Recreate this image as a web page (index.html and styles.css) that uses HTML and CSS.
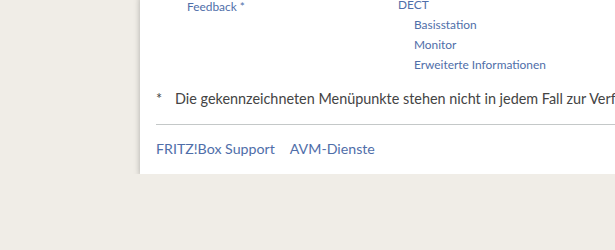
FILE: index.html
```html
<!DOCTYPE html>
<html lang="de">
<head>
    <meta charset="UTF-8">
    <title>FRITZ!Box Inhalt</title>
    <link rel="stylesheet" href="styles.css">
</head>
<body>
    <div class="page">
        <div class="sitemap">
            <ul class="col col-left">
                <li><a href="#">Feedback *</a></li>
            </ul>
            <ul class="col col-right">
                <li><a href="#">DECT</a>
                    <ul class="sub">
                        <li><a href="#">Basisstation</a></li>
                        <li><a href="#">Monitor</a></li>
                        <li><a href="#">Erweiterte Informationen</a></li>
                    </ul>
                </li>
            </ul>
        </div>
        <p class="note"><span class="star">*</span>Die gekennzeichneten Menüpunkte stehen nicht in jedem Fall zur Verfügung.</p>
        <div class="footer">
            <a href="#">FRITZ!Box Support</a>
            <a href="#">AVM-Dienste</a>
        </div>
    </div>
</body>
</html>
```

FILE: styles.css
```css
body { margin: 0; background-color: #f0ede7; font-family: Lato, "Liberation Sans", sans-serif; overflow: hidden; }
a { color: #4f6ea9; text-decoration: none; }
ul { list-style: none; margin: 0; padding: 0; }
.page { margin: -5px 0 0 140px; width: 760px; background-color: #fff; padding: 0 16px 10px; box-shadow: 0 2px 6px rgba(0, 0, 0, 0.28); }
.sitemap { display: flex; font-size: 11.9px; line-height: 20px; }
.col-left { width: 211px; padding-left: 31px; }
.col-left li { padding-top: 2px; }
.sub { padding-left: 16px; }
.note { margin: 0; padding: 14px 0 15px; font-size: 14.4px; color: #444; border-bottom: 1px solid #c4c8c8; line-height: 20px; }
.star { display: inline-block; width: 19px; }
.footer { display: flex; gap: 15px; padding: 14px 0 5px; font-size: 14.2px; line-height: 20px; }
```
